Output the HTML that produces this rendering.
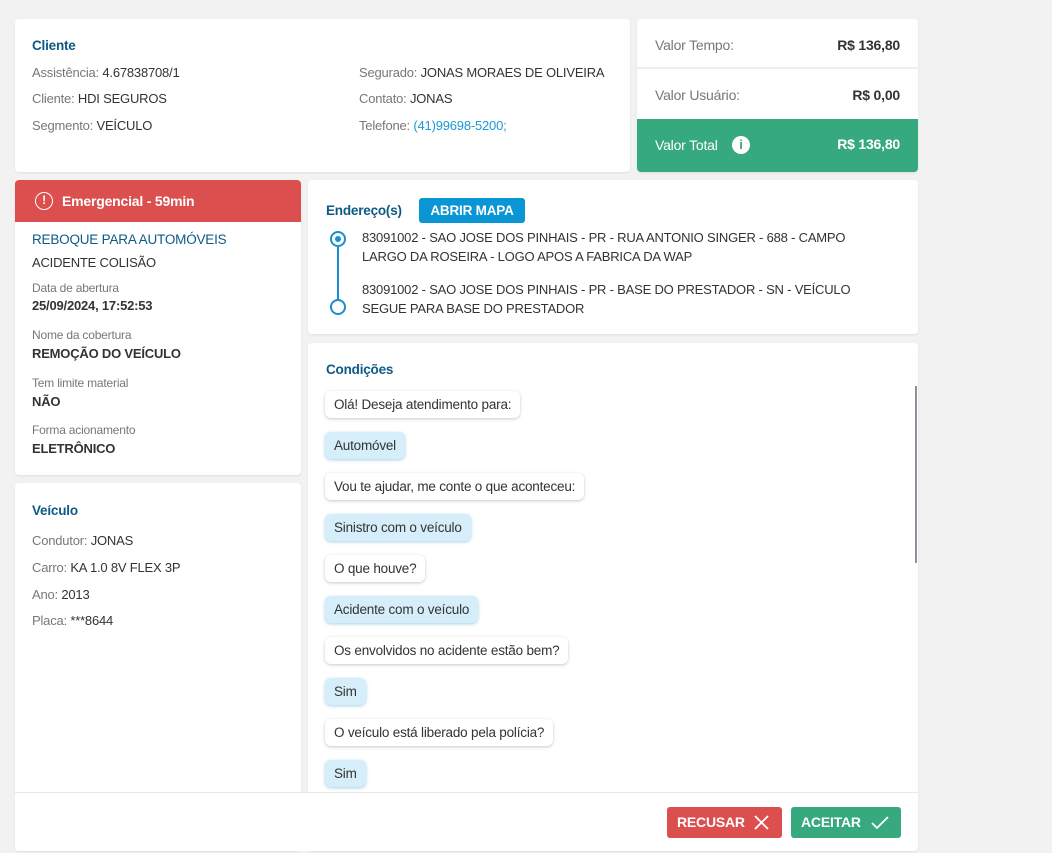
<!DOCTYPE html>
<html><head><meta charset="utf-8"><style>
*{box-sizing:border-box;margin:0;padding:0}
body{width:1052px;height:853px;background:#f2f2f2;font-family:"Liberation Sans",sans-serif;font-size:13px;color:#333;position:relative;overflow:hidden;letter-spacing:-0.2px}
.card{position:absolute;background:#fff;border-radius:4px;box-shadow:0 1px 2px rgba(0,0,0,.08)}
.t{position:absolute;white-space:nowrap;line-height:16px}
.h{color:#0d5a85;font-weight:bold;font-size:13.5px}
.g{color:#777}
.s{font-size:12px;color:#777}
.b{font-weight:bold}
.bub{position:absolute;left:17px;height:27px;line-height:27px;padding:0 9px;border-radius:6px;background:#fff;box-shadow:0 1px 3px rgba(0,0,0,.22);white-space:nowrap;font-size:13.5px}
.bub.a{background:#d6eef9;box-shadow:0 1px 3px rgba(0,120,180,.35)}
</style></head><body>

<div class="card" style="left:15px;top:19px;width:615px;height:153px">
<div class="t h" style="left:17px;top:19px">Cliente</div>
<div class="t" style="left:17px;top:46px"><span class="g">Assistência:</span> 4.67838708/1</div>
<div class="t" style="left:17px;top:72px"><span class="g">Cliente:</span> HDI SEGUROS</div>
<div class="t" style="left:17px;top:99px"><span class="g">Segmento:</span> VEÍCULO</div>
<div class="t" style="left:344px;top:46px"><span class="g">Segurado:</span> JONAS MORAES DE OLIVEIRA</div>
<div class="t" style="left:344px;top:72px"><span class="g">Contato:</span> JONAS</div>
<div class="t" style="left:344px;top:99px"><span class="g">Telefone:</span> <span style="color:#1a9ad6">(41)99698-5200;</span></div>
</div>

<div class="card" style="left:637px;top:19px;width:281px;height:153px;overflow:hidden;font-size:14px">
<div class="t g" style="left:18px;top:18px">Valor Tempo:</div>
<div class="t b" style="right:18px;top:18px">R$ 136,80</div>
<div style="position:absolute;left:0;right:0;top:48px;height:2px;background:#eee"></div>
<div class="t g" style="left:18px;top:68px">Valor Usuário:</div>
<div class="t b" style="right:18px;top:68px">R$ 0,00</div>
<div style="position:absolute;left:0;right:0;top:100px;bottom:0;background:#36a97e">
<div class="t" style="left:18px;top:18px;color:#fff;font-size:14px">Valor Total</div>
<div style="position:absolute;left:95px;top:17px;width:18px;height:18px;border-radius:50%;background:#fff;color:#36a97e;font-weight:bold;font-size:13px;text-align:center;line-height:18px">i</div>
<div class="t b" style="right:18px;top:17px;color:#fff">R$ 136,80</div>
</div></div>

<div class="card" style="left:15px;top:180px;width:286px;height:295px;overflow:hidden">
<div style="position:absolute;left:0;right:0;top:0;height:42px;background:#dc4f4f">
<div style="position:absolute;left:20px;top:12px;width:18px;height:18px;border:1.6px solid #fff;border-radius:50%;color:#fff;font-size:12px;text-align:center;line-height:15px;font-weight:bold">!</div>
<div class="t b" style="left:47px;top:13px;color:#fff;font-size:14px">Emergencial - 59min</div></div>
<div class="t" style="left:17px;top:52px;color:#0d5a85;font-size:13.5px">REBOQUE PARA AUTOMÓVEIS</div>
<div class="t" style="left:17px;top:75px">ACIDENTE COLISÃO</div>
<div class="t s" style="left:17px;top:100px">Data de abertura</div>
<div class="t b" style="left:17px;top:118px">25/09/2024, 17:52:53</div>
<div class="t s" style="left:17px;top:147px">Nome da cobertura</div>
<div class="t b" style="left:17px;top:166px">REMOÇÃO DO VEÍCULO</div>
<div class="t s" style="left:17px;top:195px">Tem limite material</div>
<div class="t b" style="left:17px;top:214px">NÃO</div>
<div class="t s" style="left:17px;top:242px">Forma acionamento</div>
<div class="t b" style="left:17px;top:261px">ELETRÔNICO</div>
</div>

<div class="card" style="left:15px;top:483px;width:286px;height:368px">
<div class="t h" style="left:17px;top:20px">Veículo</div>
<div class="t" style="left:17px;top:50px"><span class="g">Condutor:</span> JONAS</div>
<div class="t" style="left:17px;top:77px"><span class="g">Carro:</span> KA 1.0 8V FLEX 3P</div>
<div class="t" style="left:17px;top:104px"><span class="g">Ano:</span> 2013</div>
<div class="t" style="left:17px;top:130px"><span class="g">Placa:</span> ***8644</div>
</div>

<div class="card" style="left:308px;top:180px;width:610px;height:154px">
<div class="t h" style="left:18px;top:23px">Endereço(s)</div>
<div style="position:absolute;left:111px;top:18px;width:106px;height:25px;background:#0a96d4;border-radius:3px;color:#fff;font-weight:bold;font-size:13.5px;text-align:center;line-height:25px">ABRIR MAPA</div>
<div style="position:absolute;left:22px;top:51px;width:16px;height:16px;border:2px solid #1a8fd0;border-radius:50%"><div style="position:absolute;left:3px;top:3px;width:6px;height:6px;background:#1a8fd0;border-radius:50%"></div></div>
<div style="position:absolute;left:29px;top:67px;width:2px;height:53px;background:#1a8fd0"></div>
<div style="position:absolute;left:22px;top:119px;width:16px;height:16px;border:2px solid #1a8fd0;border-radius:50%"></div>
<div class="t" style="left:54px;top:50px">83091002 - SAO JOSE DOS PINHAIS - PR - RUA ANTONIO SINGER - 688 - CAMPO</div>
<div class="t" style="left:54px;top:69px">LARGO DA ROSEIRA - LOGO APOS A FABRICA DA WAP</div>
<div class="t" style="left:54px;top:102px">83091002 - SAO JOSE DOS PINHAIS - PR - BASE DO PRESTADOR - SN - VEÍCULO</div>
<div class="t" style="left:54px;top:121px">SEGUE PARA BASE DO PRESTADOR</div>
</div>

<div class="card" style="left:308px;top:343px;width:610px;height:508px">
<div class="t h" style="left:18px;top:19px">Condições</div>
<div style="position:absolute;left:607px;top:43px;width:2px;height:177px;background:#8a939b"></div>
<div class="bub" style="top:48px">Olá! Deseja atendimento para:</div>
<div class="bub a" style="top:89px">Automóvel</div>
<div class="bub" style="top:130px">Vou te ajudar, me conte o que aconteceu:</div>
<div class="bub a" style="top:171px">Sinistro com o veículo</div>
<div class="bub" style="top:212px">O que houve?</div>
<div class="bub a" style="top:253px">Acidente com o veículo</div>
<div class="bub" style="top:294px">Os envolvidos no acidente estão bem?</div>
<div class="bub a" style="top:335px">Sim</div>
<div class="bub" style="top:376px">O veículo está liberado pela polícia?</div>
<div class="bub a" style="top:417px">Sim</div>
</div>

<div style="position:absolute;left:15px;top:792px;width:903px;height:59px;background:#fff;border-top:1px solid #e8e8e8;border-radius:0 0 4px 4px">
<div style="position:absolute;left:652px;top:14px;width:115px;height:31px;background:#dc4f4f;border-radius:3px;color:#fff;font-weight:bold;font-size:14px;line-height:31px;padding-left:10px">RECUSAR
<svg style="position:absolute;left:87px;top:8px" width="15" height="15" viewBox="0 0 15 15"><path d="M1 1L14 14M14 1L1 14" stroke="#fff" stroke-width="1.8"/></svg></div>
<div style="position:absolute;left:776px;top:14px;width:110px;height:31px;background:#36a97e;border-radius:3px;color:#fff;font-weight:bold;font-size:14px;line-height:31px;padding-left:10px">ACEITAR
<svg style="position:absolute;left:80px;top:8px" width="18" height="15" viewBox="0 0 18 15"><path d="M1 8L6 13L17 2" stroke="#fff" stroke-width="1.8" fill="none"/></svg></div>
</div>
</body></html>
